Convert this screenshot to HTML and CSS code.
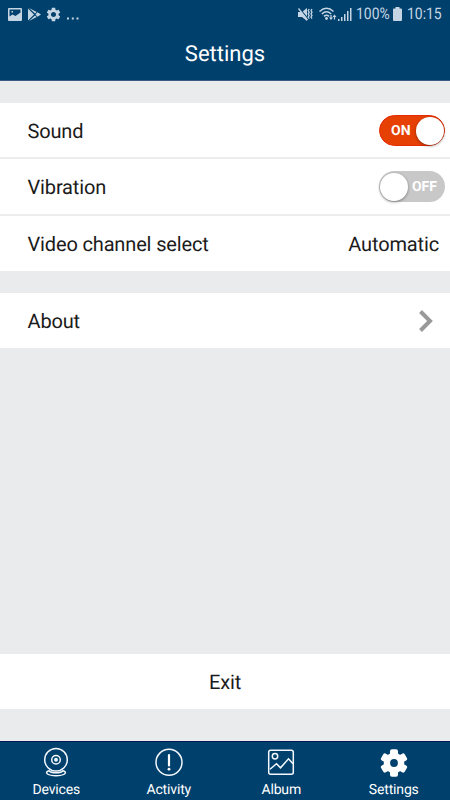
FILE: index.html
```html
<!DOCTYPE html>
<html lang="en">
<head>
<meta charset="utf-8">
<title>Settings</title>
<link rel="stylesheet" href="styles.css">
</head>
<body>
<div class="app">
  <header class="header">
    <div class="status">
      <div class="status-left">
        <svg width="14" height="13" viewBox="0 0 14 13"><path fill="currentColor" fill-rule="evenodd" d="M1 0h12q1 0 1 1v11q0 1-1 1H1q-1 0-1-1V1q0-1 1-1zM1.500 1.500v7l3-2 3 1.500 5-3.500v-3zM3.500 3h1.500v1.500H3.500z"/></svg>
        <svg class="play" width="13" height="13" viewBox="0 0 13 13"><path fill="currentColor" d="M0 .5v12L6 6.500zM1 0l6 5.600 1.700-1.700zM1 13l6-5.600 1.700 1.700zM9.500 4.300 7.500 6.500l2 2.200L13 6.500z"/></svg>
        <svg class="cog" width="17" height="17" viewBox="0 0 24 24"><path fill="currentColor" d="M19.140 12.940c.04-.3.060-.61.060-.94s-.02-.64-.07-.94l2.030-1.580c.18-.14.230-.41.120-.61l-1.920-3.320c-.12-.22-.37-.29-.59-.22l-2.390.96c-.5-.38-1.030-.7-1.620-.94l-.36-2.540c-.04-.24-.24-.41-.48-.41h-3.840c-.24 0-.43.170-.47.410l-.36 2.540c-.59.240-1.130.570-1.620.940l-2.390-.96c-.22-.08-.47 0-.59.220L2.740 8.870c-.12.210-.08.470.120.610l2.030 1.580c-.05.300-.09.630-.09.940s.02.640.070.940l-2.030 1.580c-.18.140-.23.410-.12.610l1.920 3.320c.12.220.370.290.590.220l2.390-.96c.5.380 1.030.7 1.620.94l.36 2.540c.05.240.240.410.480.410h3.840c.24 0 .44-.17.470-.41l.36-2.540c.59-.24 1.130-.56 1.620-.94l2.390.96c.22.080.470 0 .59-.22l1.920-3.320c.12-.22.070-.47-.12-.61l-2.010-1.580zM12 15.600c-1.980 0-3.600-1.620-3.600-3.600s1.620-3.600 3.600-3.600 3.600 1.620 3.600 3.600-1.620 3.600-3.600 3.600z"/></svg>
        <svg class="dots" width="12" height="3" viewBox="0 0 12 3"><path fill="currentColor" d="M0 .5h2v2H0zM4.800.5h2v2h-2zM9.500.5h2v2h-2z"/></svg>
      </div>
      <div class="status-right">
        <svg class="mute" width="15" height="13" viewBox="0 0 15 13"><path fill="currentColor" d="M0 4h4l5-4v13L4 9H0z"/><path d="M1.500.5l9 11" stroke="#00406c" stroke-width="1.200"/><path d="M.5.5l9 11.500M11.200 1l-1 1.600 1 1.600-1 1.600 1 1.600-1 1.600 1 1.600M14 1l-1 1.600 1 1.600-1 1.600 1 1.600-1 1.600 1 1.600" stroke="currentColor" stroke-width="1.300" fill="none"/></svg>
        <svg class="wifi" width="18" height="14" viewBox="0 0 18 14"><g fill="none" stroke="currentColor" stroke-width="1.500"><path d="M.5 4.500Q7.500-2 14.500 4.500M2.800 7Q7.500 2.600 12.200 7M5 9.400q2.500-2.400 5 0"/></g><circle cx="7.500" cy="11.500" r="1.400" fill="currentColor"/><path fill="currentColor" d="M12 13l-2-2.500h1.400V8h1.200v2.500H14zM15.500 7.500l2 2.500h-1.400v2.500h-1.200V10h-1.400z"/></svg>
        <svg class="signal" width="14" height="13" viewBox="0 0 14 13"><path fill="currentColor" d="M0 11h1.500v2H0zM3 9h1.500v4H3zM6 6h1.500v7H6zM9 3h1.500v10H9zM12 0h1.500v13H12z"/></svg>
        <span class="percent">100%</span>
        <svg class="battery" width="9" height="14" viewBox="0 0 9 14"><path fill="currentColor" d="M2.500 0h4v1.500H8q1 0 1 1V13q0 1-1 1H1q-1 0-1-1V2.500q0-1 1-1h1.500z"/></svg>
        <span class="time">10:15</span>
      </div>
    </div>
    <h1 class="title">Settings</h1>
  </header>
  <main class="content">
    <section class="group">
      <div class="row"><span>Sound</span><div class="toggle on"><span>ON</span><i class="knob"></i></div></div>
      <div class="row"><span>Vibration</span><div class="toggle off"><i class="knob"></i><span>OFF</span></div></div>
      <div class="row"><span>Video channel select</span><span class="value">Automatic</span></div>
    </section>
    <section class="group">
      <div class="row single"><span>About</span><svg class="chevron" width="14" height="22" viewBox="0 0 14 22"><path d="M1.500 1.500 11 11l-9.500 9.500" fill="none" stroke="#999" stroke-width="4"/></svg></div>
    </section>
    <button class="exit">Exit</button>
  </main>
  <nav class="tabs">
    <div class="tab">
      <svg width="30" height="30" viewBox="0 0 30 30" fill="none" stroke="#f4f8fc" stroke-width="1.500"><circle cx="15" cy="12.800" r="11.300"/><circle cx="15" cy="12.800" r="4.300"/><circle cx="15" cy="12.800" r="1.200" fill="#fff"/><path d="M8 23.800q-4 1.200-1.500 3.200 2.500 1.700 8.500 1.700t8.500-1.700q2.500-2-1.500-3.200-1.500 2-7 2t-7-2z"/></svg>
      <span>Devices</span>
    </div>
    <div class="tab">
      <svg width="30" height="30" viewBox="0 0 30 30"><circle cx="15" cy="15.300" r="13" fill="none" stroke="#f4f8fc" stroke-width="1.500"/><path d="M15 8v10.500" stroke="#fff" stroke-width="2.200" stroke-linecap="round"/><circle cx="15" cy="22.200" r="1.400" fill="#fff"/></svg>
      <span>Activity</span>
    </div>
    <div class="tab">
      <svg width="30" height="30" viewBox="0 0 30 30" fill="none" stroke="#f4f8fc" stroke-width="1.500"><rect x="2.700" y="3.300" width="24.600" height="24" rx="2"/><circle cx="9" cy="9.300" r="2.700"/><path d="M4 22.300l6.500-5.500 4 4 8-9 4.500 5"/></svg>
      <span>Album</span>
    </div>
    <div class="tab">
      <svg width="30" height="30" viewBox="0 0 30 30"><g fill="#fff"><circle cx="15" cy="16" r="10.300"/><rect x="11" y="2.300" width="8" height="27.400" rx="2"/><rect x="11" y="2.300" width="8" height="27.400" rx="2" transform="rotate(60 15 16)"/><rect x="11" y="2.300" width="8" height="27.400" rx="2" transform="rotate(120 15 16)"/></g><circle cx="15" cy="16" r="3.900" fill="#00406c"/></svg>
      <span>Settings</span>
    </div>
  </nav>
</div>
</body>
</html>
```
FILE: styles.css
```css
* { box-sizing: border-box; }
body { margin: 0; font-family: Roboto, sans-serif; color: #1b1b1b; background: #e9ebed; text-rendering: geometricPrecision; }
svg { display: block; flex: none; }
.app { width: 450px; height: 800px; display: flex; flex-direction: column; overflow: hidden; }
.header { height: 81px; background: #00406c; border-bottom: 1px solid #3b5c82; color: #fff; }
.status { height: 28px; padding: 0 8px; display: flex; justify-content: space-between; align-items: center; color: #c5d5e4; }
.status-left, .status-right { display: flex; align-items: center; }
.play { margin-left: 6px; }
.cog { margin-left: 4px; }
.dots { margin: 9px 0 0 5px; }
.wifi { margin-left: 6px; }
.signal { margin-left: 1px; }
.percent { margin-left: 4px; width: 34px; }
.percent, .time { font-size: 16px; line-height: 28px; white-space: nowrap; transform: scaleX(.87); transform-origin: left; }
.battery { margin-left: 3px; }
.time { margin-left: 5px; width: 35.5px; }
.title { margin: 0; font-size: 22px; line-height: 54px; font-weight: 400; text-align: center; }
.content { flex: 1; display: flex; flex-direction: column; padding: 22px 0 32px; }
.group { background: #fff; margin-bottom: 22px; }
.row { height: 54px; padding: 1px 5px 0 27.5px; display: flex; align-items: center; justify-content: space-between; font-size: 20px; letter-spacing: -.15px; }
.row + .row { height: 57px; padding-top: 0; border-top: 2px solid #ebecee; }
.single { height: 55px; }
.group .value { margin-right: 6px; }
.chevron { margin-right: 12px; }
.toggle { width: 66px; height: 31px; border-radius: 16px; display: flex; align-items: center; justify-content: space-between; color: #fff; font-size: 14px; font-weight: 700; letter-spacing: 0; }
.toggle span { padding-top: 1px; }
.on { background: #e64005; border: 1px solid #e52b05; padding: 0 0 0 11px; }
.off { background: #c8c8c8; padding: 0 8px 0 1px; }
.knob { width: 28px; height: 28px; border-radius: 50%; background: #fff; box-shadow: 0 1px 3px #0006; }
.exit { margin-top: auto; height: 55px; border: 0; background: #fff; color: #1b1b1b; font: 20px Roboto, sans-serif; letter-spacing: -.15px; padding: 1px 0 0; text-rendering: geometricPrecision; }
.tabs { height: 59px; background: #00406c; border-top: 1px solid #001858; display: grid; grid-template-columns: repeat(4, 1fr); color: #fff; }
.tab { display: flex; flex-direction: column; align-items: center; padding-top: 5px; font-size: 14px; letter-spacing: -.15px; }
.tab span { line-height: 18px; margin-top: 4px; }
```
